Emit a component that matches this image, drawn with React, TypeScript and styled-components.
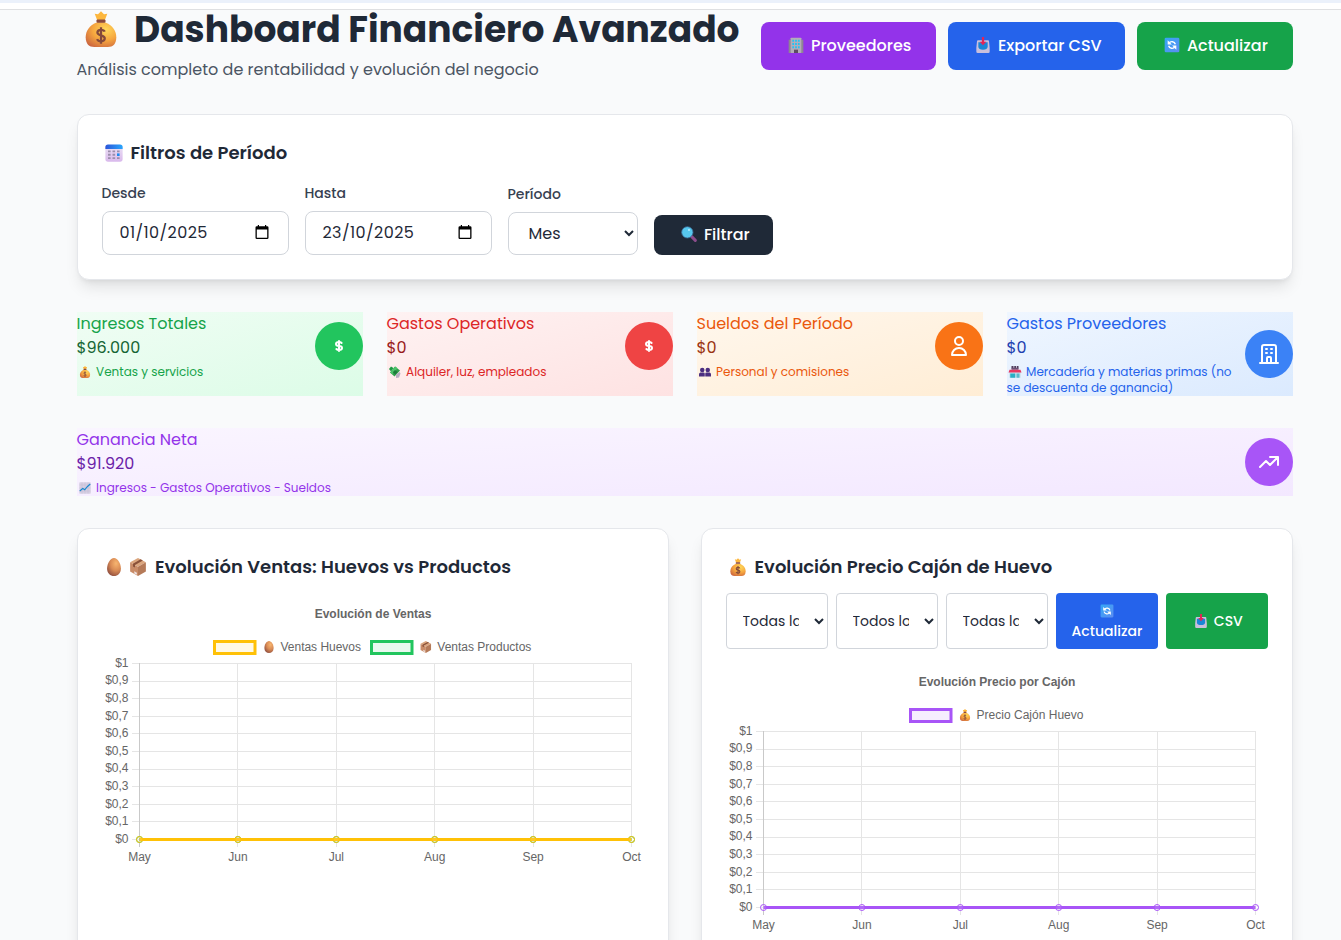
import React, { ReactNode } from 'react';
import styled, { createGlobalStyle } from 'styled-components';

const GlobalStyle = createGlobalStyle`
  *, *::before, *::after { box-sizing: border-box; }
  html, body { margin: 0; padding: 0; }
  body {
    background: #f9fafb;
    color: #1f2937;
    font-family: Poppins, Inter, "Open Sans", sans-serif;
    font-size: 16px;
    line-height: 24px;
  }
  h1, h2, h3, p { margin: 0; }
  button, select { font: inherit; color: inherit; letter-spacing: inherit; }
`;

/* ---------- emoji drawings ---------- */

const Glyph = styled.svg<{ $last?: boolean }>`
  display: inline-block;
  width: 1em;
  height: 1em;
  margin-left: 0.18em;
  margin-right: ${(p) => (p.$last === false ? '0.18em' : 'calc(0.4em + 0.600px)')};
  vertical-align: -0.14em;
  overflow: visible;
`;

type EmojiName =
  | 'bag' | 'office' | 'inbox' | 'refresh' | 'calendar' | 'lens' | 'cash'
  | 'people' | 'store' | 'chart' | 'egg' | 'box';

const drawings: Record<EmojiName, ReactNode> = {
  bag: (
    <>
      <path d="M7.800 1.800 10 2.200l2-2 2 2 2.200-.4L14.600 6H9.400z" fill="#fdb73e" />
      <path d="M9.500 7.500C4 9.500 1.800 13.500 1.800 17.500 1.800 22 4 24 7.500 24h9c3.500 0 5.700-2 5.700-6.500C22.200 13.500 20 9.500 14.500 7.500z" fill="url(#bagFill)" />
      <rect x="9" y="5.600" width="6" height="2.200" rx="0.800" fill="#8b4a3c" />
      <path d="M14.500 13.800c-.4-1-1.300-1.300-2.500-1.300-1.400 0-2.400.7-2.400 1.800 0 2.500 4.900 1.300 4.900 3.900 0 1.200-1 2-2.500 2-1.300 0-2.200-.5-2.600-1.500M12 10.800v11" fill="none" stroke="#84493b" strokeWidth="1.500" />
    </>
  ),
  office: (
    <>
      <path d="M1 4h4v20H1zM19 4h4v20h-4z" fill="#8e8593" />
      <rect x="4" y="1" width="16" height="23" rx="1" fill="#b4acb8" />
      <path d="M6.500 4h2.500v3H6.500zm4.200 0h2.600v3h-2.600zM15 4h2.500v3H15zM6.500 9h2.500v3H6.500zm4.200 0h2.600v3h-2.600zM15 9h2.500v3H15zM6.500 14h2.500v3H6.500zm4.200 0h2.600v3h-2.600zM15 14h2.500v3H15z" fill="#1fc3f5" />
      <path d="M9 19h6v5H9z" fill="#5d4c62" />
    </>
  ),
  inbox: (
    <>
      <path d="M4.500 5h15A1.500 1.500 0 0 1 21 6.500L22 16v6a2 2 0 0 1-2 2H4a2 2 0 0 1-2-2v-6l1-9.500A1.500 1.500 0 0 1 4.500 5z" fill="#c9bfdc" />
      <path d="M5 8h14v6.500c0 3-3 4.500-7 4.500s-7-1.500-7-4.500z" fill="#1b86d8" />
      <path d="M10.300 0h3.400v7H17l-5 5.500L7 7h3.300z" fill="#e32557" />
    </>
  ),
  refresh: (
    <>
      <rect x="1" y="1" width="22" height="22" rx="2" fill="url(#blueFill)" />
      <path d="M7.500 9.500A5.200 5.200 0 0 1 17 10.800M16.500 14.500A5.200 5.200 0 0 1 7 13.200" fill="none" stroke="#fff" strokeWidth="2.200" />
      <path d="M5.500 5v6.300h6.300zM18.500 19v-6.300h-6.300z" fill="#fff" />
    </>
  ),
  calendar: (
    <>
      <rect x="0.500" y="1" width="23" height="22.500" rx="3.500" fill="url(#calFill)" />
      <path d="M.5 6.500V4A3.500 3.500 0 0 1 4 0.500h16A3.500 3.500 0 0 1 23.500 4v2.500z" fill="url(#calTop)" />
      <path d="M4 8.500h3.500V11H4zm6 0h3.500V11H10zm6 0h3.500V11H16zM4 13h3.500v2.500H4zm6 0h3.500v2.500H10zM4 17.500h3.500V20H4zm6 0h3.500V20H10zm6 0h3.500V20H16z" fill="#9c8eac" />
      <path d="M16 12.500h3.500v3.500H16z" fill="#1d8bf0" />
    </>
  ),
  lens: (
    <>
      <path d="m16 16 5.500 5.500" stroke="#8c4c8b" strokeWidth="4.600" strokeLinecap="round" />
      <circle cx="9.500" cy="9.500" r="8.500" fill="#57c8ee" stroke="#3b6b97" strokeWidth="1.200" />
      <circle cx="12" cy="6" r="1.600" fill="#b2ecff" />
    </>
  ),
  cash: (
    <>
      <path d="m0 6 4-5 5 3-5 7z" fill="#1f9a45" />
      <path d="M12 1 22 9 11 21 2 13z" fill="#2f9e4b" />
      <path d="m13 1 4 3.500L6.500 16.500 2.500 13z" fill="#4cc46a" />
      <path d="m12 8 5 4-4.500 5-5-4.500z" fill="#1d7a3b" />
      <path d="m14 17 7-5 2 3-3 8-6 1z" fill="#b6adc0" />
    </>
  ),
  people: (
    <g fill="#4b2f80">
      <circle cx="6.500" cy="8" r="4.500" />
      <circle cx="17.500" cy="8" r="4.500" />
      <path d="M0 21v-4c0-3 2-4 4-4h5c2 0 2.500 1 2.500 3v5zM12.500 21v-5c0-2 .5-3 2.500-3h5c2 0 4 1 4 4v4z" />
    </g>
  ),
  store: (
    <>
      <path d="M5 0h4v5H5zm5.500 0h3.500v5h-3.500zm5 0h3.500v5h-3.500z" fill="#513d5d" />
      <rect x="5" y="3.500" width="14" height="4" fill="#6b5175" />
      <rect x="0.500" y="12" width="23" height="11.500" fill="#cbe3ee" />
      <path d="M1 7.500h22L25 13H-1z" fill="#e83860" />
      <rect x="2.500" y="15" width="10" height="8.500" fill="#2aaec4" />
      <rect x="15" y="15" width="6" height="8.500" fill="#59b9cc" />
    </>
  ),
  chart: (
    <>
      <rect x="0.500" y="0.500" width="23" height="23" rx="1.500" fill="#d7d0e3" />
      <path d="M1 6h22M1 12h22M1 18h22M6 1v22M12 1v22M18 1v22" stroke="#c2b9d1" strokeWidth="1" />
      <path d="m1.500 18 6-5 4 2.500 5-6 6-5.500" fill="none" stroke="#1687cf" strokeWidth="2.200" />
    </>
  ),
  egg: <path d="M12 0c5 0 9.200 7.500 9.200 14S17 24 12 24 2.800 20.500 2.800 14 7 0 12 0z" fill="url(#eggFill)" />,
  box: (
    <>
      <path d="M12 0 22.500 5.500 12 11.500 1.500 5.500z" fill="#dba67e" />
      <path d="M1.500 5.500 12 11.500V24L1.500 18z" fill="#c98c68" />
      <path d="M22.500 5.500 12 11.500V24l10.500-6z" fill="#b57a58" />
      <path d="m15.500 1.800 3 1.600L8 9.200v3.500l-2.700-1.500V7.600z" fill="#8a523a" />
      <path d="m7 17.500 3.500 2v2.800L7 20.500z" fill="#eee1df" />
    </>
  ),
};

const Emoji = ({ name, last }: { name: EmojiName; last?: boolean }) => (
  <Glyph viewBox="0 0 24 24" $last={last} aria-hidden="true">{drawings[name]}</Glyph>
);

const DefsHolder = styled.svg`
  position: absolute;
  width: 0;
  height: 0;
`;

const Gradients = () => (
  <DefsHolder aria-hidden="true">
    <defs>
      <radialGradient id="bagFill" cx="0.65" cy="0.3" r="0.85">
        <stop offset="0" stopColor="#ffd95a" />
        <stop offset="0.5" stopColor="#f6a63f" />
        <stop offset="1" stopColor="#c8603f" />
      </radialGradient>
      <radialGradient id="eggFill" cx="0.65" cy="0.3" r="0.8">
        <stop offset="0" stopColor="#f7b570" />
        <stop offset="0.5" stopColor="#d98b55" />
        <stop offset="1" stopColor="#8b4a3d" />
      </radialGradient>
      <linearGradient id="blueFill" x1="0" y1="0" x2="1" y2="1">
        <stop offset="0" stopColor="#35a7f5" />
        <stop offset="1" stopColor="#5c8df2" />
      </linearGradient>
      <linearGradient id="calFill" x1="0" y1="0" x2="0" y2="1">
        <stop offset="0" stopColor="#ece4f5" />
        <stop offset="1" stopColor="#d9b9ec" />
      </linearGradient>
      <linearGradient id="calTop" x1="0" y1="0" x2="1" y2="0">
        <stop offset="0" stopColor="#2c55d9" />
        <stop offset="1" stopColor="#28a6fc" />
      </linearGradient>
    </defs>
  </DefsHolder>
);

/* ---------- page frame ---------- */

const Shell = styled.div`
  height: 940px;
  overflow: hidden;
`;

const TopStrip = styled.div`
  height: 10px;
  background: #fff;
  border-top: 3px solid #ebf1fb;
  border-bottom: 1px solid #dfe0e2;
`;

const Page = styled.main`
  display: flex;
  flex-direction: column;
  gap: 32px;
  height: 930px;
  padding: 0 48.500px 0 76.500px;
  > * { flex-shrink: 0; }
`;

const Text = styled.span<{ $track?: number }>`
  letter-spacing: ${(p) => p.$track ?? 0}px;
  white-space: nowrap;
`;

const Header = styled.header`
  display: flex;
  justify-content: space-between;
  align-items: center;
  height: 72px;
`;

const Title = styled.h1`
  font-size: 36px;
  line-height: 40px;
  font-weight: 700;
  white-space: nowrap;
`;

const Subtitle = styled.p`
  margin-top: 8px;
  color: #4b5563;
`;

const Actions = styled.div`
  display: flex;
  gap: 12px;
`;

const ActionButton = styled.button<{ $bg: string; $width: number; $height?: number }>`
  width: ${(p) => p.$width}px;
  height: ${(p) => p.$height ?? 48}px;
  padding: 0 0 1px 24.500px;
  border: 0;
  border-radius: 8px;
  background: ${(p) => p.$bg};
  color: #fff;
  font-weight: 500;
  text-align: left;
  white-space: nowrap;
`;

const Card = styled.section`
  padding: 24px;
  border: 1px solid #e5e7eb;
  border-radius: 12px;
  background: #fff;
  box-shadow: 0 10px 15px -3px rgba(0, 0, 0, 0.1), 0 4px 6px -4px rgba(0, 0, 0, 0.1);
`;

const CardTitle = styled.h2<{ $gap?: number }>`
  margin-bottom: ${(p) => p.$gap ?? 16}px;
  font-size: 18px;
  line-height: 28px;
  font-weight: 600;
  white-space: nowrap;
`;

/* ---------- filters ---------- */

const FilterRow = styled.div`
  display: flex;
  align-items: flex-end;
  gap: 16px;
  height: 72px;
`;

const Field = styled.div`
  display: flex;
  flex-direction: column;
  gap: 8px;
`;

const Label = styled.label`
  color: #374151;
  font-size: 14px;
  line-height: 20px;
  font-weight: 500;
`;

const DateBox = styled.div`
  display: flex;
  align-items: center;
  justify-content: space-between;
  width: 187px;
  height: 44px;
  padding: 0 19px 0 17px;
  border: 1px solid #d1d5db;
  border-radius: 8px;
`;

const PeriodSelect = styled.select`
  width: 130px;
  height: 43px;
  padding: 0 0 0 16px;
  border: 1px solid #d1d5db;
  border-radius: 8px;
  background: #fff;
`;

const CalendarMark = () => (
  <svg width="14" height="16" viewBox="0 0 14 16" aria-hidden="true">
    <path d="M2.800 0h1.200v1.300h6V0h1.200v1.300h1A1.300 1.300 0 0 1 13.500 2.600v10.100A1.300 1.300 0 0 1 12.200 14H1.800A1.300 1.300 0 0 1 .5 12.700V2.600A1.300 1.300 0 0 1 1.800 1.300h1zM1.800 4.600v8.100h10.400V4.600z" fill="#000" />
  </svg>
);

/* ---------- summary tiles ---------- */

const Tiles = styled.div`
  display: grid;
  grid-template-columns: repeat(4, 1fr);
  gap: 24px;
`;

const Tile = styled.article<{ $from: string; $to: string }>`
  background: linear-gradient(to bottom right, ${(p) => p.$from}, ${(p) => p.$to});
`;

const TileBody = styled.div`
  display: flex;
  align-items: center;
  justify-content: space-between;
`;

const TileName = styled.p<{ $color: string }>`
  color: ${(p) => p.$color};
`;

const TileNote = styled.p<{ $color: string }>`
  margin-top: 4px;
  color: ${(p) => p.$color};
  font-size: 12px;
  line-height: 16px;
`;

const Disc = styled.div<{ $bg: string }>`
  display: flex;
  align-items: center;
  justify-content: center;
  flex: none;
  width: 48px;
  height: 48px;
  border-radius: 50%;
  background: ${(p) => p.$bg};
`;

const iconPaths = {
  dollar: 'M12 8c-1.657 0-3 .895-3 2s1.343 2 3 2 3 .895 3 2-1.343 2-3 2m0-8c1.110 0 2.080.402 2.599 1M12 8V7m0 1v8m0 0v1m0-1c-1.110 0-2.080-.402-2.599-1',
  user: 'M16 7a4 4 0 11-8 0 4 4 0 018 0zM12 14a7 7 0 00-7 7h14a7 7 0 00-7-7z',
  building: 'M19 21V5a2 2 0 00-2-2H7a2 2 0 00-2 2v16m14 0h2m-2 0h-5m-9 0H3m2 0h5M9 7h1m-1 4h1m4-4h1m-1 4h1m-5 10v-5a1 1 0 011-1h2a1 1 0 011 1v5m-4 0h4',
  trend: 'M13 7h8m0 0v8m0-8l-8 8-4-4-6 6',
};

type TileData = {
  name: string; value: string; notes: string[]; emoji: EmojiName; icon: keyof typeof iconPaths;
  from: string; to: string; accent: string; strong: string; disc: string;
};

const tiles: TileData[] = [
  { name: 'Ingresos Totales', value: '$96.000', notes: ['Ventas y servicios'], emoji: 'bag', icon: 'dollar', from: '#f0fdf4', to: '#dcfce7', accent: '#16a34a', strong: '#166534', disc: '#22c55e' },
  { name: 'Gastos Operativos', value: '$0', notes: ['Alquiler, luz, empleados'], emoji: 'cash', icon: 'dollar', from: '#fef2f2', to: '#fee2e2', accent: '#dc2626', strong: '#991b1b', disc: '#ef4444' },
  { name: 'Sueldos del Período', value: '$0', notes: ['Personal y comisiones'], emoji: 'people', icon: 'user', from: '#fff7ed', to: '#ffedd5', accent: '#ea580c', strong: '#9a3412', disc: '#f97316' },
  { name: 'Gastos Proveedores', value: '$0', notes: ['Mercadería y materias primas (no', 'se descuenta de ganancia)'], emoji: 'store', icon: 'building', from: '#eff6ff', to: '#dbeafe', accent: '#2563eb', strong: '#1e40af', disc: '#3b82f6' },
];

const netTile: TileData = {
  name: 'Ganancia Neta', value: '$91.920', notes: ['Ingresos - Gastos Operativos - Sueldos'], emoji: 'chart', icon: 'trend',
  from: '#faf5ff', to: '#f3e8ff', accent: '#9333ea', strong: '#6b21a8', disc: '#a855f7',
};

const SummaryTile = ({ data }: { data: TileData }) => (
  <Tile $from={data.from} $to={data.to}>
    <TileBody>
      <div>
        <TileName $color={data.accent}><Text>{data.name}</Text></TileName>
        <TileName $color={data.strong}><Text>{data.value}</Text></TileName>
        <TileNote $color={data.accent}>
          <Emoji name={data.emoji} />
          {data.notes.map((line, i) => (
            <React.Fragment key={line}>
              {i > 0 && <br />}
              <Text>{line}</Text>
            </React.Fragment>
          ))}
        </TileNote>
      </div>
      <Disc $bg={data.disc}>
        <svg width="24" height="24" viewBox="0 0 24 24" fill="none" stroke="#fff" strokeWidth="2" strokeLinecap="round" strokeLinejoin="round" aria-hidden="true">
          <path d={iconPaths[data.icon]} />
        </svg>
      </Disc>
    </TileBody>
  </Tile>
);

/* ---------- charts ---------- */

const ChartGrid = styled.div`
  display: grid;
  grid-template-columns: repeat(2, 1fr);
  gap: 32px;
`;

const ChartCard = styled(Card)`
  height: 480px;
`;

const Controls = styled.div`
  display: grid;
  grid-template-columns: repeat(5, 1fr);
  gap: 8px;
  height: 56px;
  margin-bottom: 16px;
  font-size: 14px;
  line-height: 20px;
`;

const SmallSelect = styled.select`
  width: 100%;
  min-width: 0;
  padding: 0 12px;
  border: 1px solid #d1d5db;
  border-radius: 4px;
  background: #fff;
`;

const SmallButton = styled.button<{ $bg: string }>`
  padding: 0 0 0 1px;
  border: 0;
  border-radius: 4px;
  background: ${(p) => p.$bg};
  color: #fff;
  font-weight: 500;
`;

const Plot = styled.svg`
  display: block;
  width: 542px;
  height: 271px;
  font-family: "Liberation Sans", Arial, sans-serif;
  font-size: 12px;
  fill: #666;
`;

type Series = { label: string; color: string; tint: string; emoji: EmojiName; x: number; textX: number; textW: number };

const months = ['May', 'Jun', 'Jul', 'Aug', 'Sep', 'Oct'];
const ticks = ['$1', '$0,9', '$0,8', '$0,7', '$0,6', '$0,5', '$0,4', '$0,3', '$0,2', '$0,1', '$0'];
const LEFT = 37.5;
const STEP = 98.4;
const TOP = 66.5;
const ROW = 17.6;
const BASE = 242.5;

const LineChart = ({ title, series }: { title: string; series: Series[] }) => (
  <Plot viewBox="0 0 542 271">
    <text x="271" y="21" textAnchor="middle" fontWeight="700">{title}</text>
    {series.map((s) => (
      <g key={s.label}>
        <rect x={s.x} y="44.500" width="40.500" height="12" fill={s.tint} stroke={s.color} strokeWidth="3" />
        <svg x={s.textX - 17.5} y="44" width="12" height="12" viewBox="0 0 24 24">{drawings[s.emoji]}</svg>
        <text x={s.textX} y="54" textLength={s.textW}>{s.label}</text>
      </g>
    ))}
    <g shapeRendering="crispEdges" strokeWidth="1">
      {ticks.map((t, i) => {
        const y = Math.floor(TOP + i * ROW) + 0.5;
        return <line key={t} x1="30" x2="530" y1={y} y2={y} stroke="#e5e5e5" />;
      })}
      {months.map((m, i) => {
        const x = Math.floor(LEFT + i * STEP) + 0.5;
        return <line key={m} x1={x} x2={x} y1="66" y2="250" stroke={i === 0 ? '#c9c9c9' : '#e5e5e5'} />;
      })}
    </g>
    {ticks.map((t, i) => (
      <text key={t} x="26.500" y={TOP + i * ROW + 3.3} textAnchor="end">{t}</text>
    ))}
    {months.map((m, i) => (
      <text key={m} x={LEFT + i * STEP} y="264" textAnchor="middle">{m}</text>
    ))}
    {[...series].reverse().map((s) => (
      <g key={s.label}>
        <line x1={LEFT} x2={LEFT + 5 * STEP} y1={BASE} y2={BASE} stroke={s.color} strokeWidth="3" />
        {months.map((m, i) => (
          <circle key={m} cx={LEFT + i * STEP} cy={BASE} r="3" fill={s.tint} fillOpacity={0.12} stroke={s.color} strokeWidth="1" />
        ))}
      </g>
    ))}
  </Plot>
);

const salesSeries: Series[] = [
  { label: 'Ventas Huevos', color: '#ffc107', tint: '#fff9e6', emoji: 'egg', x: 112.5, textX: 178.5, textW: 80.5 },
  { label: 'Ventas Productos', color: '#22c55e', tint: '#e9f9ef', emoji: 'box', x: 269.5, textX: 335.3, textW: 94 },
];

const priceSeries: Series[] = [
  { label: 'Precio Cajón Huevo', color: '#a855f7', tint: '#f6eefe', emoji: 'bag', x: 184.5, textX: 250.5, textW: 107 },
];

export default function App() {
  return (
    <Shell>
      <GlobalStyle />
      <Gradients />
      <TopStrip />
      <Page>
        <Header>
          <div>
            <Title><Emoji name="bag" /><Text>Dashboard Financiero Avanzado</Text></Title>
            <Subtitle><Text>Análisis completo de rentabilidad y evolución del negocio</Text></Subtitle>
          </div>
          <Actions>
            <ActionButton $bg="#9333ea" $width={175}><Emoji name="office" /><Text>Proveedores</Text></ActionButton>
            <ActionButton $bg="#2563eb" $width={177}><Emoji name="inbox" /><Text>Exportar CSV</Text></ActionButton>
            <ActionButton $bg="#16a34a" $width={156}><Emoji name="refresh" /><Text>Actualizar</Text></ActionButton>
          </Actions>
        </Header>

        <Card>
          <CardTitle><Emoji name="calendar" /><Text>Filtros de Período</Text></CardTitle>
          <FilterRow>
            <Field>
              <Label><Text>Desde</Text></Label>
              <DateBox><Text $track={0.42}>01/10/2025</Text><CalendarMark /></DateBox>
            </Field>
            <Field>
              <Label><Text>Hasta</Text></Label>
              <DateBox><Text $track={0.42}>23/10/2025</Text><CalendarMark /></DateBox>
            </Field>
            <Field>
              <Label><Text>Período</Text></Label>
              <PeriodSelect><option>Mes</option></PeriodSelect>
            </Field>
            <ActionButton $bg="#1f2937" $width={119} $height={40}><Emoji name="lens" /><Text>Filtrar</Text></ActionButton>
          </FilterRow>
        </Card>

        <Tiles>
          {tiles.map((t) => <SummaryTile key={t.name} data={t} />)}
        </Tiles>
        <SummaryTile data={netTile} />

        <ChartGrid>
          <ChartCard>
            <CardTitle><Emoji name="egg" last={false} /><Emoji name="box" /><Text>Evolución Ventas: Huevos vs Productos</Text></CardTitle>
            <LineChart title="Evolución de Ventas" series={salesSeries} />
          </ChartCard>
          <ChartCard>
            <CardTitle $gap={12}><Emoji name="bag" /><Text>Evolución Precio Cajón de Huevo</Text></CardTitle>
            <Controls>
              <SmallSelect><option>Todas las</option></SmallSelect>
              <SmallSelect><option>Todos los</option></SmallSelect>
              <SmallSelect><option>Todas las</option></SmallSelect>
              <SmallButton $bg="#2563eb"><Emoji name="refresh" last={false} /><br /><Text>Actualizar</Text></SmallButton>
              <SmallButton $bg="#16a34a"><Emoji name="inbox" /><Text>CSV</Text></SmallButton>
            </Controls>
            <LineChart title="Evolución Precio por Cajón" series={priceSeries} />
          </ChartCard>
        </ChartGrid>
      </Page>
    </Shell>
  );
}
